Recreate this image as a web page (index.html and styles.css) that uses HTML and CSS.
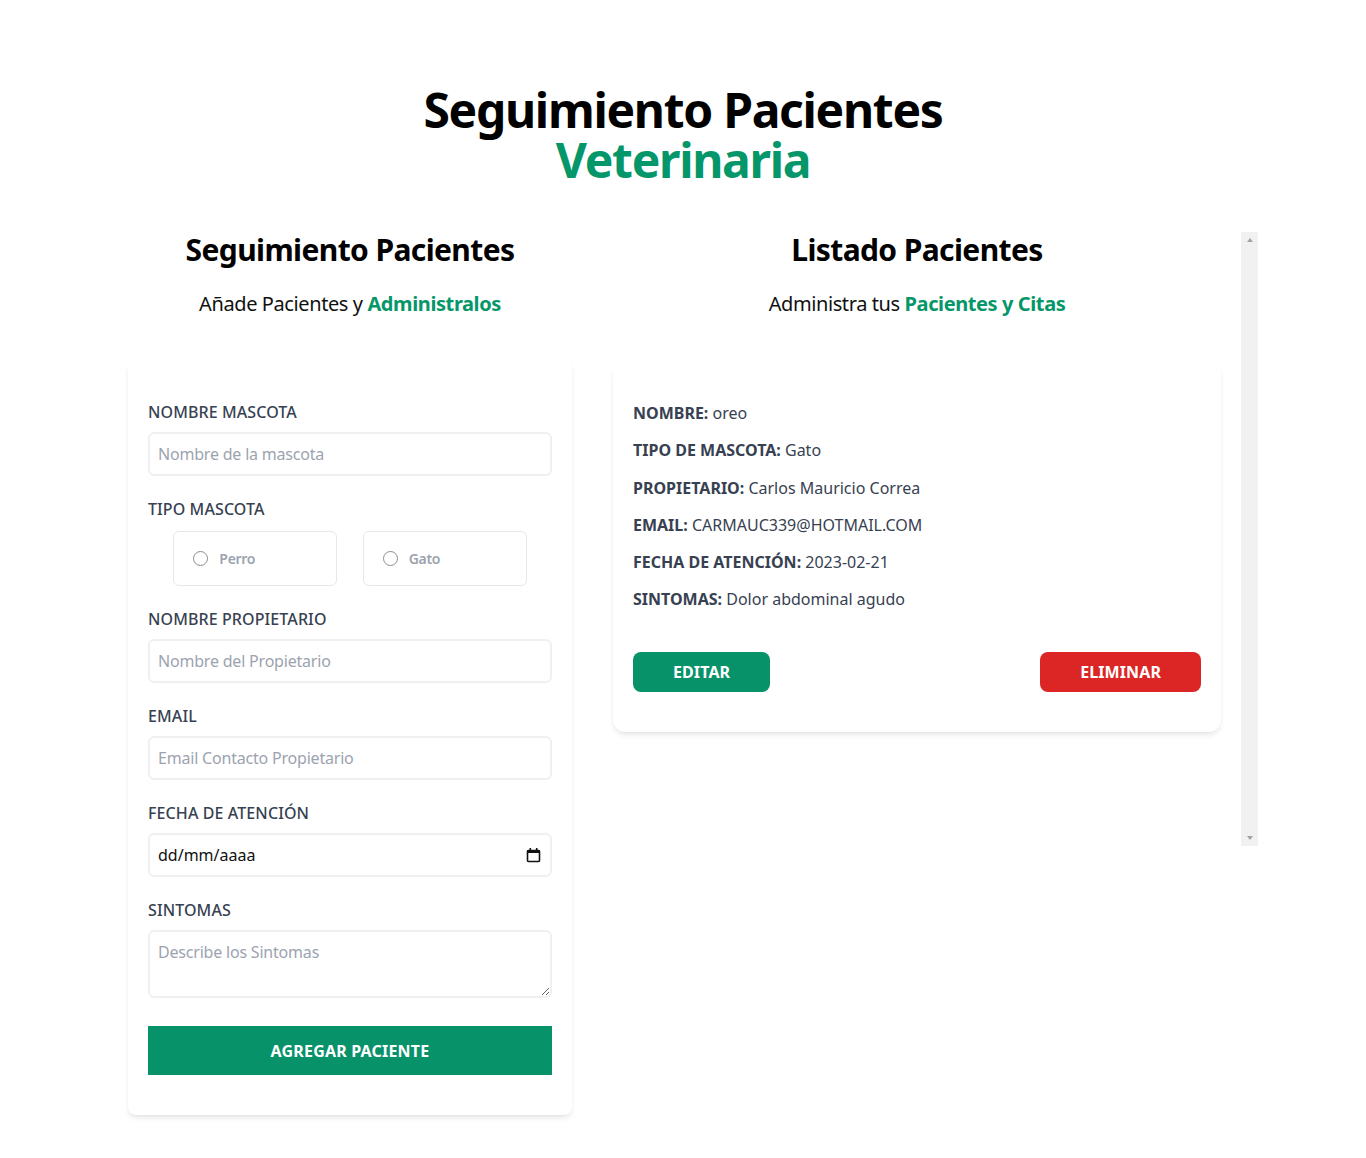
FILE: index.html
```html
<!DOCTYPE html>
<html lang="es">
<head>
<meta charset="utf-8">
<title>Seguimiento Pacientes Veterinaria</title>
<link rel="stylesheet" href="styles.css">
</head>
<body>
<div class="container">
  <h1 class="title">Seguimiento Pacientes <span class="green">Veterinaria</span></h1>

  <div class="columns">
    <div class="col-form">
      <h2 class="col-title">Seguimiento Pacientes</h2>
      <p class="col-sub">Añade Pacientes y <span class="green bold">Administralos</span></p>

      <form class="card form-card">
        <div class="field">
          <label class="label" for="mascota">Nombre Mascota</label>
          <input class="input" id="mascota" type="text" placeholder="Nombre de la mascota">
        </div>

        <div class="field">
          <span class="label">Tipo Mascota</span>
          <div class="radio-row">
            <label class="radio-box"><input class="radio" type="radio" name="tipo"><span>Perro</span></label>
            <label class="radio-box"><input class="radio" type="radio" name="tipo"><span>Gato</span></label>
          </div>
        </div>

        <div class="field">
          <label class="label" for="propietario">Nombre Propietario</label>
          <input class="input" id="propietario" type="text" placeholder="Nombre del Propietario">
        </div>

        <div class="field">
          <label class="label" for="email">Email</label>
          <input class="input" id="email" type="email" placeholder="Email Contacto Propietario">
        </div>

        <div class="field">
          <label class="label" for="fecha">Fecha de atención</label>
          <div class="date-wrap">
            <input class="input input-date" id="fecha" type="text" value="dd/mm/aaaa" readonly>
            <svg class="cal-icon" width="15" height="16" viewBox="0 0 15 16" aria-hidden="true">
              <rect x="1.5" y="3.5" width="12" height="11" fill="none" stroke="#111" stroke-width="1.6" rx="1"/>
              <rect x="1" y="3" width="13" height="3" fill="#111"/>
              <rect x="3.5" y="1" width="1.6" height="3" fill="#111"/>
              <rect x="9.9" y="1" width="1.6" height="3" fill="#111"/>
            </svg>
          </div>
        </div>

        <div class="field field-last">
          <label class="label" for="sintomas">Sintomas</label>
          <textarea class="input textarea" id="sintomas" rows="2" placeholder="Describe los Sintomas"></textarea>
        </div>

        <button class="btn-submit" type="button">Agregar Paciente</button>
      </form>
    </div>

    <div class="col-list-wrap">
      <div class="col-list">
        <h2 class="col-title">Listado Pacientes</h2>
        <p class="col-sub">Administra tus <span class="green bold">Pacientes y Citas</span></p>

        <div class="card patient-card">
          <p class="info"><span class="info-key">Nombre:</span> oreo</p>
          <p class="info"><span class="info-key">Tipo de Mascota:</span> Gato</p>
          <p class="info"><span class="info-key">Propietario:</span> Carlos Mauricio Correa</p>
          <p class="info"><span class="info-key">Email:</span> CARMAUC339@HOTMAIL.COM</p>
          <p class="info"><span class="info-key">Fecha de atención:</span> 2023-02-21</p>
          <p class="info"><span class="info-key">Sintomas:</span> Dolor abdominal agudo</p>

          <div class="actions">
            <button class="btn btn-edit" type="button">Editar</button>
            <button class="btn btn-delete" type="button">Eliminar</button>
          </div>
        </div>
      </div>
      <div class="scrollbar" aria-hidden="true">
        <span class="arrow arrow-up"></span>
        <span class="arrow arrow-down"></span>
      </div>
    </div>
  </div>
</div>
</body>
</html>
```

FILE: styles.css
```css
* {
  box-sizing: border-box;
}

html, body {
  margin: 0;
  padding: 0;
  background: #ffffff;
}

body {
  font-family: "Noto Sans", "Open Sans", sans-serif;
  color: #111;
}

.container {
  width: 1150px;
  margin: 85px auto 0;
}

.green {
  color: #059669;
}

.bold {
  font-weight: 700;
}

.title {
  margin: 0 auto;
  width: 560px;
  text-align: center;
  font-size: 48px;
  line-height: 50px;
  font-weight: 700;
  letter-spacing: -1.3px;
  color: #000;
}

.columns {
  display: flex;
  margin-top: 47px;
  align-items: flex-start;
}

.col-form {
  width: 444px;
  margin: 0 21px 40px 20px;
  flex: none;
}

.col-list-wrap {
  flex: 1;
  display: flex;
  height: 614px;
}

.col-list {
  flex: 1;
  min-width: 0;
}

.scrollbar {
  width: 17px;
  flex: none;
  background: #f1f1f1;
  display: flex;
  flex-direction: column;
  justify-content: space-between;
  align-items: center;
  padding: 6px 0;
}

.arrow {
  width: 0;
  height: 0;
  border-left: 3.5px solid transparent;
  border-right: 3.5px solid transparent;
}

.arrow-up {
  border-bottom: 4px solid #a3a3a3;
}

.arrow-down {
  border-top: 4px solid #a3a3a3;
}

.col-title {
  margin: 0;
  text-align: center;
  font-size: 30px;
  line-height: 36px;
  font-weight: 700;
  letter-spacing: -0.6px;
  color: #000;
}

.col-sub {
  margin: 22px 0 0;
  text-align: center;
  font-size: 20px;
  line-height: 28px;
  letter-spacing: -0.4px;
  color: #111;
}

.card {
  background: #fff;
  box-shadow: 0 4px 6px -1px rgba(0, 0, 0, 0.08), 0 2px 4px -2px rgba(0, 0, 0, 0.08);
}

.form-card {
  margin-top: 42px;
  padding: 40px 20px;
  border-radius: 8px;
}

.field {
  margin-bottom: 21px;
}

.field-last {
  margin-bottom: 0;
}

.label {
  display: block;
  font-size: 16px;
  line-height: 24px;
  font-weight: 500;
  text-transform: uppercase;
  letter-spacing: 0.1px;
  color: #374151;
}

.input {
  display: block;
  width: 100%;
  margin-top: 8px;
  padding: 8px;
  border: 2px solid #f0f0f1;
  border-radius: 6px;
  font-family: inherit;
  font-size: 16px;
  line-height: 24px;
  height: 44px;
  color: #374151;
  letter-spacing: -0.2px;
  outline: none;
}

.input::placeholder {
  color: #9ca3af;
}

.date-wrap {
  position: relative;
}

.input-date {
  color: #111;
  letter-spacing: 0;
}

.cal-icon {
  position: absolute;
  right: 11px;
  top: 14px;
}

.textarea {
  height: 68px;
  resize: vertical;
}

.radio-row {
  display: flex;
  justify-content: space-evenly;
  margin-top: 10px;
}

.radio-box {
  display: flex;
  align-items: center;
  width: 164px;
  height: 55px;
  padding: 0 19px;
  border: 1px solid #e8e8ea;
  border-radius: 6px;
  font-size: 14px;
  font-weight: 600;
  color: #9ca3af;
  letter-spacing: -0.3px;
}

.radio {
  appearance: none;
  -webkit-appearance: none;
  width: 15px;
  height: 15px;
  margin: 0 11px 0 0;
  border: 1px solid #8d8d8d;
  border-radius: 50%;
  background: #fff;
  flex: none;
}

.btn-submit {
  display: block;
  width: 100%;
  margin-top: 28px;
  height: 49px;
  border: 0;
  background: #07926a;
  color: #fff;
  font-family: inherit;
  font-size: 16px;
  font-weight: 700;
  text-transform: uppercase;
  letter-spacing: 0.2px;
}

.patient-card {
  margin: 43px 20px 40px;
  padding: 40px 20px;
  border-radius: 12px;
}

.info {
  margin: 0 0 13.3px;
  font-size: 16px;
  line-height: 24px;
  color: #374151;
  letter-spacing: 0;
}

.info:last-of-type {
  margin-bottom: 0;
}

.info-key {
  font-weight: 700;
  text-transform: uppercase;
}

.actions {
  display: flex;
  justify-content: space-between;
  margin-top: 41px;
}

.btn {
  height: 40px;
  padding: 0 40px;
  border: 0;
  border-radius: 8px;
  color: #fff;
  font-family: inherit;
  font-size: 16px;
  font-weight: 700;
  text-transform: uppercase;
  letter-spacing: 0.1px;
}

.btn-edit {
  background: #07926a;
}

.btn-delete {
  background: #dc2626;
}
```
